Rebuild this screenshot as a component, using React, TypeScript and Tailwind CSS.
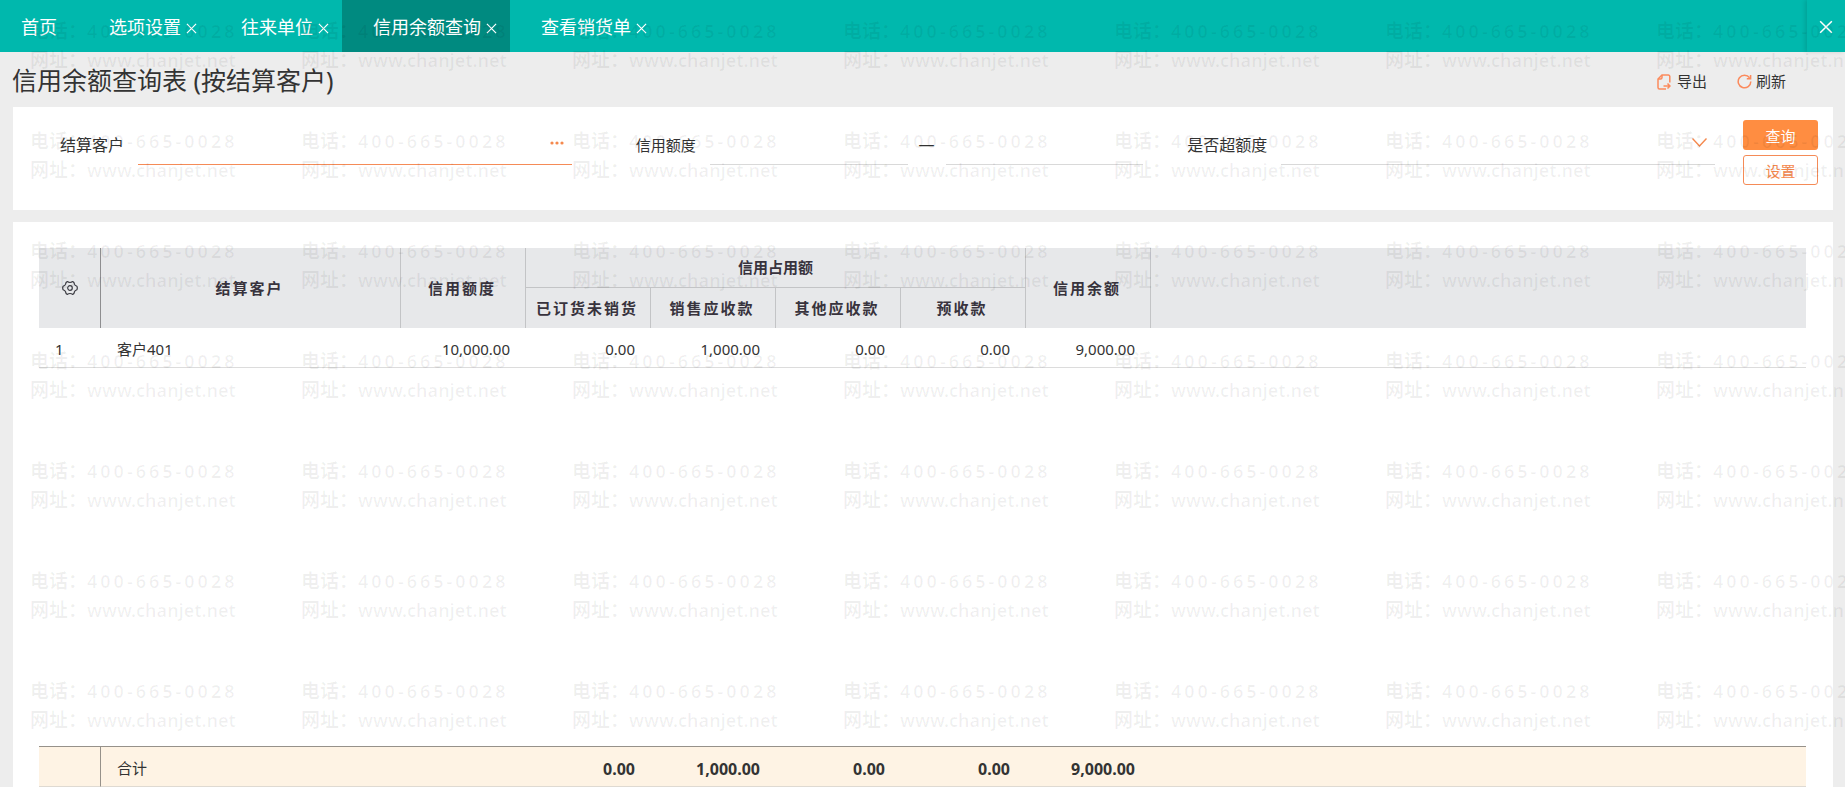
import { useState } from 'react';
import clsx from 'clsx';

interface Tab {
  id: string;
  title: string;
}

const TABS: Tab[] = [
  { id: 'options', title: '选项设置' },
  { id: 'partners', title: '往来单位' },
  { id: 'credit', title: '信用余额查询' },
  { id: 'sales', title: '查看销货单' },
];

const OCCUPIED = ['已订货未销货', '销售应收款', '其他应收款', '预收款'];

const ROWS = [
  { name: '客户401', amounts: ['10,000.00', '0.00', '1,000.00', '0.00', '0.00', '9,000.00'] },
];

const TOTALS = ['', '0.00', '1,000.00', '0.00', '0.00', '9,000.00'];

function CloseIcon({ className }: { className: string }) {
  return (
    <svg viewBox="0 0 12 12" className={className} fill="none" stroke="currentColor" strokeWidth="1.3" aria-hidden="true">
      <path d="M1 1l10 10M11 1L1 11" />
    </svg>
  );
}

function ExportIcon() {
  return (
    <svg viewBox="0 0 14 16" className="h-4 w-[14px] text-[#fb8a5c]" fill="none" stroke="currentColor" strokeWidth="1.5" aria-hidden="true">
      <path d="M12.800 8.500V2.500A1.500 1.500 0 0 0 11.300 1H5L1 5v8.500A1.500 1.500 0 0 0 2.500 15H9" />
      <path d="M5 1v2.500A1.500 1.500 0 0 1 3.500 5H1" />
      <path d="M6.500 12H13M10.500 9.500L13 12l-2.500 2.500" />
    </svg>
  );
}

function RefreshIcon() {
  return (
    <svg viewBox="0 0 15 15" className="size-[15px] text-[#fb8a5c]" fill="none" stroke="currentColor" strokeWidth="1.5" aria-hidden="true">
      <path d="M13.800 7.500A6.300 6.300 0 1 1 12.600 3.800" />
      <path d="M13.600 1v3.800H9.800" />
    </svg>
  );
}

function GearIcon() {
  return (
    <svg viewBox="0 0 16 16" className="size-4" fill="none" stroke="#3b3b42" strokeWidth="1.2" strokeLinejoin="round" aria-hidden="true">
      <path d="M5.200 1.600Q8 3.400 10.800 1.600Q12.200 2 12.500 4.400Q12.900 5.600 14.900 6.300Q15.700 8 14.900 9.700Q12.900 10.400 12.500 11.600Q12.200 14 10.800 14.400Q8 12.600 5.200 14.400Q3.800 14 3.500 11.600Q3.100 10.400 1.100 9.700Q.3 8 1.100 6.300Q3.100 5.600 3.500 4.400Q3.800 2 5.200 1.600Z" />
      <circle cx="8" cy="8" r="2.300" />
    </svg>
  );
}

function Watermark() {
  return (
    <div
      aria-hidden="true"
      className="pointer-events-none absolute inset-0 grid auto-rows-[110px] grid-cols-[repeat(7,271px)] overflow-hidden pt-[17px] pl-[30px] text-[19px] leading-[29px] font-semibold whitespace-nowrap text-black/6"
    >
      {Array.from({ length: 49 }, (_, i) => (
        <div key={i}>
          <p>
            电话：<span className="text-lg leading-[29px] tracking-[3px]">400-665-0028</span>
          </p>
          <p>
            网址：<span className="text-lg leading-[29px]">www.chanjet.net</span>
          </p>
        </div>
      ))}
    </div>
  );
}

function Columns() {
  return (
    <colgroup>
      <col className="w-[62px]" />
      <col className="w-[300px]" />
      {TOTALS.map((_, i) => (
        <col key={i} className="w-[125px]" />
      ))}
      <col />
    </colgroup>
  );
}

export default function App() {
  const [active, setActive] = useState('credit');

  return (
    <div className="relative flex min-h-screen flex-col bg-[#ededed] font-['Noto_Sans','Noto_Sans_CJK_SC',sans-serif] text-[15px] text-[#333]">
      <nav className="flex h-[52px] bg-[#00b8ad] text-lg text-white">
        <button type="button" className="px-[21px] pt-0.5">
          首页
        </button>
        {TABS.map((tab) => (
          <div
            key={tab.id}
            className={clsx('flex items-center gap-[5px] pt-0.5 pr-[13px] pl-[31px]', tab.id === active && 'bg-[#008a80]')}
          >
            <button type="button" onClick={() => setActive(tab.id)}>
              {tab.title}
            </button>
            <button type="button" aria-label={`关闭${tab.title}`} className="pt-0.5">
              <CloseIcon className="size-[11px]" />
            </button>
          </div>
        ))}
        <button
          type="button"
          aria-label="关闭"
          className="ml-auto flex w-[38px] items-center justify-center pt-0.5 shadow-[-2px_0_4px_rgba(0,0,0,0.12)]"
        >
          <CloseIcon className="size-[14px]" />
        </button>
      </nav>

      <header className="flex h-[55px] items-center justify-between pr-[59px] pl-3">
        <h1 className="text-[25px] leading-8">信用余额查询表 (按结算客户)</h1>
        <div className="flex gap-[30px] pt-1">
          <button type="button" className="flex items-center gap-[6px]">
            <ExportIcon />
            导出
          </button>
          <button type="button" className="flex items-center gap-1">
            <RefreshIcon />
            刷新
          </button>
        </div>
      </header>

      <main className="flex flex-1 flex-col gap-3 pr-3 pl-[13px]">
        <form className="flex gap-7 bg-white pt-[13px] pr-[15px] pb-[25px] pl-[31px]" onSubmit={(e) => e.preventDefault()}>
          <div className="grid h-[45px] flex-1 grid-cols-3 grid-rows-1 gap-11 text-base leading-6">
            <div className="flex min-w-0 gap-[14px]">
              <label htmlFor="customer" className="w-20 shrink-0 pt-[13px] text-right">
                结算客户
              </label>
              <div className="flex min-w-0 flex-1 border-b border-[#f58b57]">
                <input id="customer" className="min-w-0 flex-1 outline-none" />
                <button type="button" aria-label="选择客户" className="px-2 pt-0.5">
                  <svg viewBox="0 0 14 4" className="h-1 w-[14px]" fill="#f5894e" aria-hidden="true">
                    <circle cx="2" cy="2" r="1.600" />
                    <circle cx="7" cy="2" r="1.600" />
                    <circle cx="12" cy="2" r="1.600" />
                  </svg>
                </button>
              </div>
            </div>
            <div className="flex min-w-0 gap-[14px]">
              <label htmlFor="limit-from" className="w-20 shrink-0 pt-[13px] text-right text-[15px] leading-6">
                信用额度
              </label>
              <div className="flex min-w-0 flex-1">
                <input id="limit-from" className="min-w-0 flex-1 border-b border-[#d9d9d9] outline-none" />
                <span className="w-[38px] shrink-0 pt-3 text-center">—</span>
                <input aria-label="信用额度上限" className="min-w-0 flex-1 border-b border-[#d9d9d9] outline-none" />
              </div>
            </div>
            <div className="flex min-w-0 gap-[14px]">
              <label htmlFor="over-limit" className="w-20 shrink-0 pt-[13px] text-right">
                是否超额度
              </label>
              <div className="relative flex min-w-0 flex-1 border-b border-[#d9d9d9]">
                <select id="over-limit" className="min-w-0 flex-1 appearance-none outline-none">
                  <option />
                </select>
                <svg viewBox="0 0 15 9" className="pointer-events-none absolute top-[18px] right-2 h-[9px] w-[15px]" fill="none" stroke="#f5894e" strokeWidth="1.400" aria-hidden="true">
                  <path d="M.5 .5l7 7.500 7-7.500" />
                </svg>
              </div>
            </div>
          </div>
          <div className="flex w-[75px] flex-col gap-[5px]">
            <button type="submit" className="h-[30px] rounded-[3px] bg-[#ff8d41] pt-0.5 text-white">
              查询
            </button>
            <button type="button" className="h-[30px] rounded-[3px] border border-[#f58b57] pt-0.5 text-[#f5894e]">
              设置
            </button>
          </div>
        </form>

        <section className="flex flex-1 flex-col justify-between bg-white pt-[26px] pr-[27px] pl-[26px]">
          <table className="w-full table-fixed border-separate border-spacing-0">
            <Columns />
            <thead className="bg-[#e7e8ea] text-[#38333d] [&_th]:border-r [&_th]:border-[#c3c4c6] [&_th]:p-0 [&_th]:font-bold">
              <tr className="h-10">
                <th rowSpan={2} className="border-[#8e8e90]!">
                  <button type="button" aria-label="列设置" className="mx-auto block">
                    <GearIcon />
                  </button>
                </th>
                <th rowSpan={2} className="pr-0.5! tracking-[2px]">
                  结算客户
                </th>
                <th rowSpan={2} className="pr-0.5! tracking-[2px]">
                  信用额度
                </th>
                <th colSpan={4} className="border-b">
                  信用占用额
                </th>
                <th rowSpan={2} className="pr-0.5! tracking-[2px]">
                  信用余额
                </th>
                <td rowSpan={2} />
              </tr>
              <tr className="h-10">
                {OCCUPIED.map((title) => (
                  <th key={title} className="pr-0.5! tracking-[2px]">
                    {title}
                  </th>
                ))}
              </tr>
            </thead>
            <tbody className="[&_td]:border-b [&_td]:border-[#dcdcdc] [&_td]:pt-1 [&_td]:pb-0">
              {ROWS.map((row, i) => (
                <tr key={row.name} className="h-10">
                  <td className="pl-4">{i + 1}</td>
                  <td className="pl-4">{row.name}</td>
                  {row.amounts.map((amount, j) => (
                    <td key={j} className="pr-4 text-right">
                      {amount}
                    </td>
                  ))}
                  <td />
                </tr>
              ))}
            </tbody>
          </table>

          <table className="w-full table-fixed border-separate border-spacing-0 bg-[#fef3e4]">
            <Columns />
            <tbody className="[&_td]:border-t [&_td]:border-b [&_td]:border-t-[#96918a] [&_td]:border-b-[#dfdad2] [&_td]:pt-1 [&_td]:pb-0">
              <tr className="h-[41px]">
                <td className="border-r border-r-[#96918a]" />
                <td className="pl-4">合计</td>
                {TOTALS.map((total, i) => (
                  <td key={i} className="pr-4 text-right text-base font-bold">
                    {total}
                  </td>
                ))}
                <td />
              </tr>
            </tbody>
          </table>
        </section>
      </main>

      <Watermark />
    </div>
  );
}
